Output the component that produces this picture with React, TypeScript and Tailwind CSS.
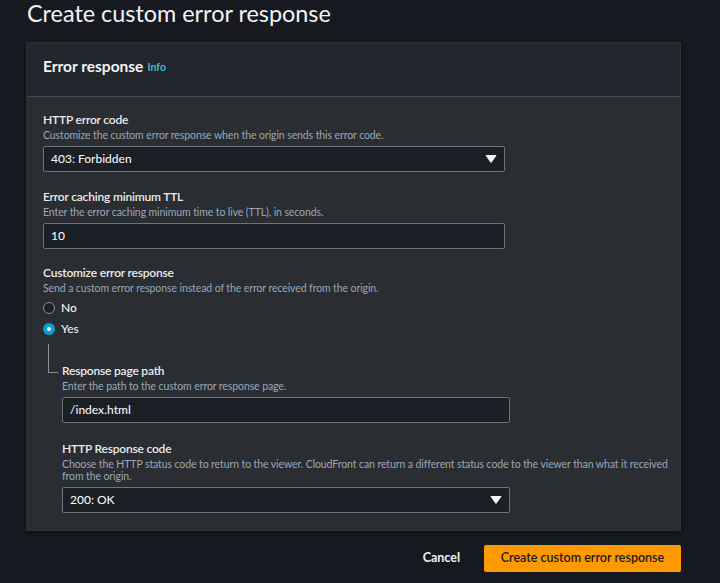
import { useState } from 'react'

const font = { fontFamily: 'Lato, "Open Sans", Arial, sans-serif' }

function Caret() {
  return (
    <svg width="12" height="10" viewBox="0 0 12 10" className="shrink-0">
      <path d="M1 1.5 L11 1.5 L6 8.5 Z" fill="#f2f3f3" stroke="#f2f3f3" strokeWidth="1" strokeLinejoin="round" />
    </svg>
  )
}

function Field({
  label,
  desc,
  children,
}: {
  label: string
  desc: React.ReactNode
  children: React.ReactNode
}) {
  return (
    <div>
      <p className="text-[12px] leading-[16px] font-semibold tracking-[-0.2px] text-[#e9ebed]">{label}</p>
      <p className="text-[10.5px] leading-[12px] tracking-[-0.1px] text-[#9ba7b6] mt-[1px]">{desc}</p>
      <div className="mt-[5px]">{children}</div>
    </div>
  )
}

function Box({ value, select, width }: { value: string; select?: boolean; width: string }) {
  return (
    <div
      className={`${width} h-[26px] flex items-center justify-between pl-[7px] pr-[7px] bg-[#1b1f26] border border-[#6b737d] rounded-[2px]`}
    >
      <span className="text-[12px] text-[#f2f3f3] font-medium">{value}</span>
      {select && <Caret />}
    </div>
  )
}

export default function App() {
  const [choice, setChoice] = useState<'no' | 'yes'>('yes')

  return (
    <div className="w-[720px] h-[583px] overflow-hidden bg-[#16191f] text-[#f2f3f3]" style={font}>
      <h1 className="pl-[27px] text-[23.4px] leading-[26px] text-[#f2f3f3]">Create custom error response</h1>

      <div className="mt-[16px] ml-[26px] w-[655px] border border-[#2e3238] shadow-[0_1px_4px_rgba(0,0,0,0.6)]">
        <div className="h-[54px] bg-[#22252b] border-b border-[#454b53] flex items-center pl-[16px] pb-[5px]">
          <span className="text-[15.5px] font-bold text-[#f2f3f3]">Error response</span>
          <span className="ml-[4px] text-[10.5px] font-bold text-[#44b9d6] mt-[2px]">Info</span>
        </div>

        <div className="bg-[#2a2d32] pl-[16px] pt-[15px] pb-[17px] flex flex-col">
          <Field label="HTTP error code" desc="Customize the custom error response when the origin sends this error code.">
            <Box value="403: Forbidden" select width="w-[462px]" />
          </Field>

          <div className="mt-[17px]">
            <Field label="Error caching minimum TTL" desc="Enter the error caching minimum time to live (TTL), in seconds.">
              <Box value="10" width="w-[462px]" />
            </Field>
          </div>

          <div className="mt-[16px]">
            <p className="text-[12px] leading-[16px] font-semibold tracking-[-0.2px] text-[#e9ebed]">
              Customize error response
            </p>
            <p className="text-[10.5px] leading-[12px] tracking-[-0.1px] text-[#9ba7b6] mt-[1px]">
              Send a custom error response instead of the error received from the origin.
            </p>
            <div className="mt-[6px] flex flex-col gap-[5px]">
              {(['no', 'yes'] as const).map(v => (
                <button
                  key={v}
                  onClick={() => setChoice(v)}
                  className="flex items-center gap-[6px] h-[16px] text-left"
                >
                  {choice === v ? (
                    <span className="w-[12px] h-[12px] rounded-full bg-[#0a9fd6] flex items-center justify-center">
                      <span className="w-[4px] h-[4px] rounded-full bg-white" />
                    </span>
                  ) : (
                    <span className="w-[12px] h-[12px] rounded-full border border-[#8a929b] bg-[#1b1f26]" />
                  )}
                  <span className="text-[12px] font-medium text-[#f2f3f3]">{v === 'no' ? 'No' : 'Yes'}</span>
                </button>
              ))}
            </div>
          </div>

          {choice === 'yes' && (
            <div className="flex mt-[7px]">
              <div className="w-[19px] shrink-0 pl-[5px]">
                <div className="w-[10px] h-[29px] border-l border-b border-[#8a929b]" />
              </div>
              <div className="pt-[19px]">
                <Field label="Response page path" desc="Enter the path to the custom error response page.">
                  <Box value="/index.html" width="w-[448px]" />
                </Field>
                <div className="mt-[18px]">
                  <Field
                    label="HTTP Response code"
                    desc={
                      <span className="block w-[614px]">
                        Choose the HTTP status code to return to the viewer. CloudFront can return a different status code
                        to the viewer than what it received from the origin.
                      </span>
                    }
                  >
                    <Box value="200: OK" select width="w-[448px]" />
                  </Field>
                </div>
              </div>
            </div>
          )}
        </div>
      </div>

      <div className="flex justify-end items-center gap-[24px] mt-[14px] w-[681px]">
        <button className="text-[12.5px] font-bold text-[#f2f3f3]">Cancel</button>
        <button className="h-[27px] w-[197px] bg-[#ff9900] rounded-[2px] text-[12.5px] font-semibold text-[#16191f]">
          Create custom error response
        </button>
      </div>
    </div>
  )
}
